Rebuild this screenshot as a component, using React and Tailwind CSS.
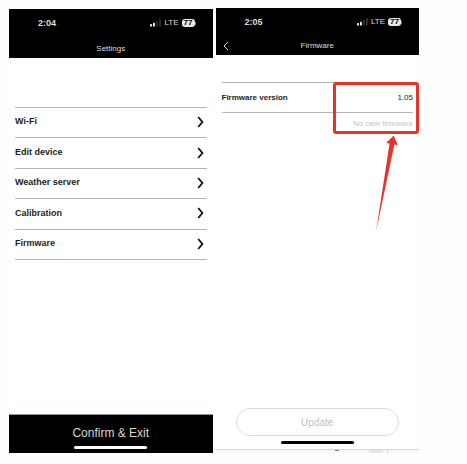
import React from 'react';

const menuItems = ['Wi-Fi', 'Edit device', 'Weather server', 'Calibration', 'Firmware'];

const StatusBar = ({ time }) => {
  return (
    <div className="flex h-[28px] items-center justify-between pl-[29px] pr-[17px] text-[9px] font-bold leading-none">
      <span>{time}</span>
      <div className="flex items-center gap-[3px]">
        {/* Signal bars */}
        <svg width="11" height="8" viewBox="0 0 11 8" aria-hidden="true">
          <rect x="0" y="5" width="2" height="2.5" rx="0.5" fill="#e5e5e5" />
          <rect x="3" y="3.8" width="2" height="3.7" rx="0.5" fill="#e5e5e5" />
          <rect x="6" y="2" width="2" height="5.5" rx="0.5" fill="#2b2b2b" />
          <rect x="9" y="0" width="2" height="7.5" rx="0.5" fill="#2b2b2b" />
        </svg>
        <span className="text-[8px] font-normal">LTE</span>
        <div className="flex items-center">
          <span className="flex h-2 w-[13px] items-center justify-center rounded-[3px] bg-[#e8e8e8] text-[8px] text-black">
            77
          </span>
          <span className="h-[3px] w-px rounded-r bg-[#8a8a8a]"></span>
        </div>
      </div>
    </div>
  );
};

const SettingsScreen = () => {
  return (
    <section className="mt-px flex min-w-0 flex-1 flex-col bg-white">
      <header className="bg-black text-[#dedede]">
        <StatusBar time="2:04" />
        <h1 className="pt-[3px] text-center text-[8px] leading-[18px]">Settings</h1>
      </header>

      <ul className="mx-[6px] mt-[49px] flex h-[153px] flex-col border-t border-[#b5b5b5]">
        {menuItems.map((item) => (
          <li key={item} className="flex flex-1 border-b border-[#b5b5b5]">
            <button type="button" className="flex w-full items-center justify-between pb-px pr-[3px] text-[9px] font-bold text-[#1c1c1c]">
              {item}
              <svg width="7" height="12" viewBox="0 0 7 12" fill="none" aria-hidden="true">
                <path d="M1.2 1 L5.4 6 L1.2 11" stroke="#161616" strokeWidth="1.9" />
              </svg>
            </button>
          </li>
        ))}
      </ul>

      <footer className="mt-auto flex flex-col items-center border-t border-[#8f9592] bg-black pb-1">
        <button type="button" className="h-[31px] w-full pt-[5px] text-[12px] leading-none text-[#d8d8d8]">
          Confirm &amp; Exit
        </button>
        <div className="h-[3px] w-[73px] rounded-full bg-white"></div>
      </footer>
    </section>
  );
};

const FirmwareScreen = () => {
  return (
    <section className="flex min-w-0 flex-1 flex-col bg-white">
      <header className="bg-black text-[#dedede]">
        <StatusBar time="2:05" />
        <div className="grid grid-cols-[1fr_auto_1fr] items-center px-[7px] pt-px">
          <button type="button" aria-label="Back" className="justify-self-start">
            <svg width="6" height="10" viewBox="0 0 6 10" fill="none" aria-hidden="true">
              <path d="M5 1 L1 5 L5 9" stroke="#dedede" strokeWidth="1" />
            </svg>
          </button>
          <h1 className="text-[8px] leading-[18px]">Firmware</h1>
        </div>
      </header>

      <div className="relative mx-[6px] mt-[27px]">
        <dl className="flex h-[31px] items-center justify-between border-y border-[#b5b5b5] text-[8px] text-[#1c1c1c]">
          <dt className="font-bold">Firmware version</dt>
          <dd>1.05</dd>
        </dl>
        <p className="pt-[3px] text-right text-[8px] leading-[16px] text-[#c4c4c4]">No new firmware</p>

        {/* Highlight around the version */}
        <div className="absolute -right-[6px] top-0 h-[52px] w-[86px] rounded-[3px] border-[3px] border-[#e5352b]"></div>
        <svg
          className="absolute right-[14px] top-[53px]"
          width="24"
          height="98"
          viewBox="0 0 24 98"
          aria-hidden="true"
        >
          <path d="M18.7 0.5 L22.9 10.2 L19.4 9.6 L1 97 L14.5 8.8 L11.2 7.8 Z" fill="#e5352b" />
        </svg>
      </div>

      <div className="mt-auto flex flex-col items-center">
        <button type="button" className="h-[28px] w-4/5 rounded-full border border-[#e2dddd] text-[10px] text-[#bfbfbf]">
          Update
        </button>
        <div className="mb-[5px] mt-[5px] h-[3px] w-[73px] rounded-full bg-black"></div>
        <div className="flex h-1 w-full items-start justify-end gap-[4px] border-t border-[#d6d6d6] bg-[#f8f8f8] pr-[31px]">
          <span className="mr-[26px] h-px w-1 bg-[#777777]"></span>
          <span className="h-[3px] w-[14px] bg-[#e6e6e6]"></span>
          <span className="h-[3px] w-px bg-[#cccccc]"></span>
        </div>
      </div>
    </section>
  );
};

const App = () => {
  return (
    <main className="flex min-h-screen gap-[3px] bg-[#fefefe] pb-[11px] pl-[9px] pr-12 pt-2 font-['Liberation_Sans',Arial,sans-serif]">
      <SettingsScreen />
      <FirmwareScreen />
    </main>
  );
};

export default App;
